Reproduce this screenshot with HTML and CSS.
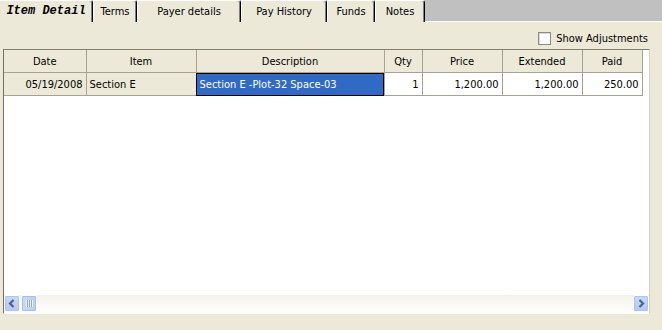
FILE: index.html
```html
<!DOCTYPE html>
<html lang="en">

<head>
    <meta charset="UTF-8">
    <title>Item Detail</title>
    <link rel="stylesheet" href="styles.css">
</head>

<body>
    <div class="tabs">
        <div class="tab active" style="width: 93px">Item Detail</div>
        <div class="tab" style="width: 44px">Terms</div>
        <div class="tab" style="width: 104px">Payer details</div>
        <div class="tab" style="width: 86px">Pay History</div>
        <div class="tab" style="width: 48px">Funds</div>
        <div class="tab" style="width: 50px">Notes</div>
        <div class="tab-fill"></div>
    </div>

    <div class="panel">
        <div class="options">
            <label class="check"><span class="box"></span>Show Adjustments</label>
        </div>

        <div class="grid">
            <div class="grid-body">
                <table>
                    <colgroup>
                        <col style="width: 82px">
                        <col style="width: 110px">
                        <col style="width: 188px">
                        <col style="width: 38px">
                        <col style="width: 80px">
                        <col style="width: 80px">
                        <col style="width: 60px">
                    </colgroup>
                    <thead>
                        <tr>
                            <th>Date</th>
                            <th>Item</th>
                            <th>Description</th>
                            <th>Qty</th>
                            <th>Price</th>
                            <th>Extended</th>
                            <th>Paid</th>
                        </tr>
                    </thead>
                    <tbody>
                        <tr>
                            <td class="fixed num">05/19/2008</td>
                            <td class="fixed">Section E</td>
                            <td class="selected">Section E -Plot-32 Space-03</td>
                            <td class="num">1</td>
                            <td class="num">1,200.00</td>
                            <td class="num">1,200.00</td>
                            <td class="num">250.00</td>
                        </tr>
                    </tbody>
                </table>
            </div>

            <div class="hscroll">
                <div class="sbtn">
                    <svg width="8" height="9" viewBox="0 0 8 9"><path d="M5.5 1 L2 4.5 L5.5 8" fill="none" stroke="#4d6185" stroke-width="2.2"/></svg>
                </div>
                <div class="thumb"><span class="grip"></span></div>
                <div class="track"></div>
                <div class="sbtn">
                    <svg width="8" height="9" viewBox="0 0 8 9"><path d="M2.5 1 L6 4.5 L2.5 8" fill="none" stroke="#4d6185" stroke-width="2.2"/></svg>
                </div>
            </div>
        </div>
    </div>
</body>

</html>
```

FILE: styles.css
```css
body {
    margin: 0;
    padding: 0;
    width: 662px;
    height: 330px;
    background: #ece9d8;
    font-family: "DejaVu Sans Condensed", "DejaVu Sans", sans-serif;
    font-stretch: condensed;
    font-size: 11px;
    color: #000;
    overflow: hidden;
}

.tabs {
    display: flex;
    height: 22px;
    background: #c0c0c0;
}

.tab {
    box-sizing: border-box;
    height: 22px;
    background: #ece9d8;
    border-top: 1px solid #fff;
    border-left: 1px solid #fff;
    border-right: 1px solid #000;
    border-top-right-radius: 3px;
    box-shadow: inset -1px 0 #808080;
    text-align: center;
    line-height: 21px;
}

.tab.active {
    border-left: none;
    font-family: "Liberation Mono", "Courier New", monospace;
    font-stretch: normal;
    font-weight: bold;
    font-style: italic;
    font-size: 12px;
}

.tab-fill {
    flex: 1;
    border-bottom: 1px solid #fff;
}

.panel {
    padding: 0 13px 0 3px;
}

.options {
    display: flex;
    justify-content: flex-end;
    align-items: center;
    height: 27px;
}

.check {
    display: flex;
    align-items: center;
    gap: 5px;
    margin-right: 1px;
    margin-top: 6px;
}

.box {
    width: 11px;
    height: 11px;
    background: #fff;
    border: 1px solid #8d8b84;
    box-shadow: inset 1px 1px #dcdad0;
}

.grid {
    box-sizing: border-box;
    width: 647px;
    height: 265px;
    display: flex;
    flex-direction: column;
    background: #fff;
    border-top: 1px solid #828073;
    border-left: 1px solid #716f64;
    border-right: 1px solid #d4d0c8;
    border-bottom: 1px solid #fff;
}

.grid-body {
    flex: 1;
}

table {
    border-collapse: collapse;
    table-layout: fixed;
    width: 638px;
}

th,
td {
    height: 21px;
    padding: 1px 3px 0;
    border-right: 1px solid #a5a394;
    border-bottom: 1px solid #a5a394;
    white-space: nowrap;
    overflow: hidden;
}

th {
    background: #ece9d8;
    font-weight: normal;
    text-align: center;
}

td.fixed {
    background: #ece9d8;
}

td.num {
    text-align: right;
}

td.selected {
    background: #316ac5;
    color: #fff;
    outline: 1px solid #000;
    outline-offset: -1px;
}

.hscroll {
    display: flex;
    height: 17px;
    margin-bottom: 1px;
    background: linear-gradient(#f3f1ec, #fefefb);
}

.sbtn {
    box-sizing: border-box;
    width: 16px;
    height: 17px;
    display: flex;
    align-items: center;
    justify-content: center;
    background: linear-gradient(#c8d8fc, #b4c8f6);
    border: 1px solid #fff;
    border-radius: 2px;
    box-shadow: inset 0 0 0 1px #b0c4f0;
}

.thumb {
    box-sizing: border-box;
    width: 16px;
    height: 17px;
    margin-left: 1px;
    display: flex;
    align-items: center;
    justify-content: center;
    background: linear-gradient(90deg, #c8d8fc, #bacdf8);
    border: 1px solid #fff;
    border-radius: 2px;
    box-shadow: inset 0 0 0 1px #a6bdf0;
}

.grip {
    width: 7px;
    height: 7px;
    background: repeating-linear-gradient(90deg, #eef3ff 0 1px, #8ca6e0 1px 2px);
}

.track {
    flex: 1;
}
```
